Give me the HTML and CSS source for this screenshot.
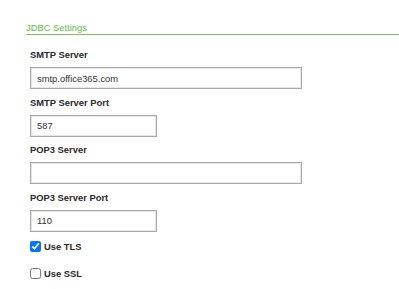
FILE: index.html
```html
<!DOCTYPE html>
<html lang="en">
<head>
    <meta charset="UTF-8">
    <meta name="viewport" content="width=device-width, initial-scale=1.0">
    <title>JDBC Settings</title>
    <link rel="stylesheet" href="styles.css">
</head>
<body>

    <div class="settings">
        <h3 class="settings-title">JDBC Settings</h3>

        <!-- Campi del server di posta -->
        <div class="settings-fields">
            <div class="field">
                <label for="smtpServer">SMTP Server</label>
                <input type="text" id="smtpServer" class="input-wide" value="smtp.office365.com">
            </div>
            <div class="field">
                <label for="smtpPort">SMTP Server Port</label>
                <input type="text" id="smtpPort" class="input-short" value="587">
            </div>
            <div class="field">
                <label for="pop3Server">POP3 Server</label>
                <input type="text" id="pop3Server" class="input-wide" value="">
            </div>
            <div class="field">
                <label for="pop3Port">POP3 Server Port</label>
                <input type="text" id="pop3Port" class="input-short" value="110">
            </div>

            <label class="check-row">
                <input type="checkbox" checked>
                <span>Use TLS</span>
            </label>
            <label class="check-row">
                <input type="checkbox">
                <span>Use SSL</span>
            </label>
        </div>
    </div>

</body>
</html>
```

FILE: styles.css
```css
body {
    font-family: 'Liberation Sans', Arial, sans-serif;
    font-size: 9.4px;
    line-height: 11px;
    background-color: #ffffff;
    color: #2b2b2b;
    margin: 0;
    padding: 0;
}
.settings {
    padding: 22px 0 0 26px;
}
.settings-title {
    margin: 0;
    padding-bottom: 1px;
    font-size: 9.4px;
    font-weight: normal;
    color: #66bb44;
    border-bottom: 1px solid #77c457;
}
.settings-fields {
    padding: 14px 0 0 4px;
}
.field {
    display: flex;
    flex-direction: column;
    align-items: flex-start;
    margin-bottom: 7.5px;
}
.field label {
    font-weight: bold;
    color: #2b2b2b;
    margin-bottom: 7px;
}
.field input {
    box-sizing: border-box;
    height: 22px;
    margin: 0;
    padding: 0 6px;
    font-family: 'Liberation Sans', Arial, sans-serif;
    font-size: 9.4px;
    color: #333;
    border: 1px solid #a9a9a9;
    box-shadow: inset 0 0 0 1px #e6e6e6;
    border-radius: 0;
    outline: none;
}
.input-wide {
    width: 272px;
}
.input-short {
    width: 127px;
}
.check-row {
    display: flex;
    align-items: center;
    gap: 3px;
    font-weight: bold;
    height: 11px;
    margin-bottom: 16px;
}
/* il margine si fonde con quello dell'ultimo campo */
.check-row:first-of-type {
    margin-top: 9.5px;
}
.check-row input {
    width: 11px;
    height: 11px;
    margin: 0;
    accent-color: #0075ff;
}
```
